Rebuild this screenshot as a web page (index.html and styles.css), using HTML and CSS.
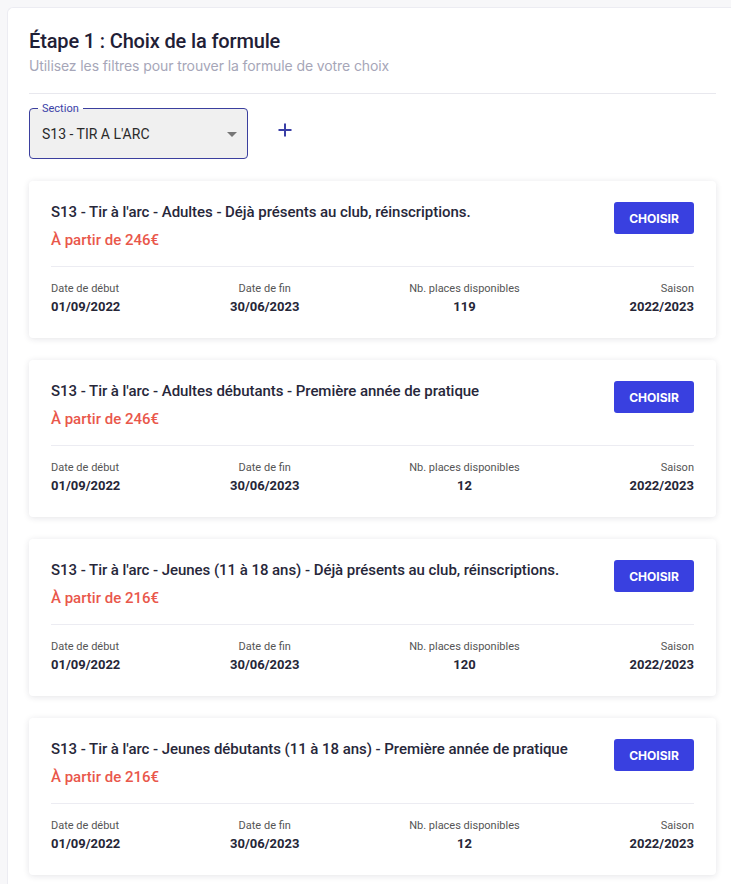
FILE: index.html
```
<!DOCTYPE html>
<html lang="fr">
<head>
<meta charset="utf-8">
<link rel="stylesheet" href="styles.css">
</head>
<body>
<div class="panel">
  <h1 class="title">Étape 1 : Choix de la formule</h1>
  <p class="subtitle">Utilisez les filtres pour trouver la formule de votre choix</p>
  <hr class="sep">
  <div class="filters">
    <div class="select">
      <span class="select-label">Section</span>
      <span class="select-value">S13 - TIR A L'ARC</span>
      <span class="caret"></span>
    </div>
    <button class="add" aria-label="Ajouter">
      <svg width="16" height="16" viewBox="0 0 16 16"><path d="M8 1.5v13M1.5 8h13" stroke="#3a3fa6" stroke-width="2" fill="none"/></svg>
    </button>
  </div>

  <div class="card">
    <div class="card-head">
      <div class="card-info">
        <div class="card-title">S13 - Tir à l'arc - Adultes - Déjà présents au club, réinscriptions.</div>
        <div class="price">À partir de 246€</div>
      </div>
      <button class="btn">CHOISIR</button>
    </div>
    <div class="card-meta">
      <div class="meta meta-left"><div class="meta-label">Date de début</div><div class="meta-value">01/09/2022</div></div>
      <div class="meta"><div class="meta-label">Date de fin</div><div class="meta-value">30/06/2023</div></div>
      <div class="meta"><div class="meta-label">Nb. places disponibles</div><div class="meta-value">119</div></div>
      <div class="meta meta-right"><div class="meta-label">Saison</div><div class="meta-value">2022/2023</div></div>
    </div>
  </div>

  <div class="card">
    <div class="card-head">
      <div class="card-info">
        <div class="card-title">S13 - Tir à l'arc - Adultes débutants - Première année de pratique</div>
        <div class="price">À partir de 246€</div>
      </div>
      <button class="btn">CHOISIR</button>
    </div>
    <div class="card-meta">
      <div class="meta meta-left"><div class="meta-label">Date de début</div><div class="meta-value">01/09/2022</div></div>
      <div class="meta"><div class="meta-label">Date de fin</div><div class="meta-value">30/06/2023</div></div>
      <div class="meta"><div class="meta-label">Nb. places disponibles</div><div class="meta-value">12</div></div>
      <div class="meta meta-right"><div class="meta-label">Saison</div><div class="meta-value">2022/2023</div></div>
    </div>
  </div>

  <div class="card">
    <div class="card-head">
      <div class="card-info">
        <div class="card-title">S13 - Tir à l'arc - Jeunes (11 à 18 ans) - Déjà présents au club, réinscriptions.</div>
        <div class="price">À partir de 216€</div>
      </div>
      <button class="btn">CHOISIR</button>
    </div>
    <div class="card-meta">
      <div class="meta meta-left"><div class="meta-label">Date de début</div><div class="meta-value">01/09/2022</div></div>
      <div class="meta"><div class="meta-label">Date de fin</div><div class="meta-value">30/06/2023</div></div>
      <div class="meta"><div class="meta-label">Nb. places disponibles</div><div class="meta-value">120</div></div>
      <div class="meta meta-right"><div class="meta-label">Saison</div><div class="meta-value">2022/2023</div></div>
    </div>
  </div>

  <div class="card">
    <div class="card-head">
      <div class="card-info">
        <div class="card-title">S13 - Tir à l'arc - Jeunes débutants (11 à 18 ans) - Première année de pratique</div>
        <div class="price">À partir de 216€</div>
      </div>
      <button class="btn">CHOISIR</button>
    </div>
    <div class="card-meta">
      <div class="meta meta-left"><div class="meta-label">Date de début</div><div class="meta-value">01/09/2022</div></div>
      <div class="meta"><div class="meta-label">Date de fin</div><div class="meta-value">30/06/2023</div></div>
      <div class="meta"><div class="meta-label">Nb. places disponibles</div><div class="meta-value">12</div></div>
      <div class="meta meta-right"><div class="meta-label">Saison</div><div class="meta-value">2022/2023</div></div>
    </div>
  </div>
</div>
</body>
</html>
```
FILE: styles.css
```
html, body { margin: 0; padding: 0; }
body {
  background: #f7f7f9;
  font-family: Roboto, "Liberation Sans", sans-serif;
  color: #262637;
  padding: 7px 0 0 7px;
  overflow: hidden;
}
.panel {
  background: #fff;
  border: 1px solid #ececf2;
  border-right: none;
  border-radius: 6px 0 0 0;
  padding: 20px 0 30px 21px;
  width: 740px;
  box-sizing: border-box;
  min-height: 900px;
}
.title {
  margin: 0;
  font-size: 20px;
  line-height: 26px;
  font-weight: 500;
  color: #1f2036;
  font-family: Roboto, sans-serif;
  letter-spacing: -0.15px;
}
.subtitle {
  margin: 2px 0 0;
  font-size: 14px;
  line-height: 20px;
  color: #a6a6b8;
  font-family: Inter, Roboto, sans-serif;
  letter-spacing: -0.1px;
}
.sep {
  border: 0;
  border-top: 1px solid #e8e8ee;
  margin: 17px 0 14px;
  width: 687px;
}
.filters {
  display: flex;
  align-items: center;
  gap: 29px;
}
.select {
  position: relative;
  width: 219px;
  height: 51px;
  box-sizing: border-box;
  border: 1px solid #3b3f9e;
  border-radius: 4px;
  background: #f0f0f0;
  display: flex;
  align-items: center;
  padding: 0 12px;
}
.select-label {
  position: absolute;
  top: -6px;
  left: 8px;
  padding: 0 4px;
  font-size: 11px;
  line-height: 11px;
  color: #3b3fa8;
  background: linear-gradient(#fff 0 6px, #f0f0f0 6px);
}
.select-value {
  font-size: 14px;
  color: #2a2a2a;
}
.caret {
  position: absolute;
  right: 10px;
  top: 23px;
  width: 0; height: 0;
  border-left: 5px solid transparent;
  border-right: 5px solid transparent;
  border-top: 5px solid #777;
}
.add {
  background: none;
  border: 0;
  padding: 0;
  width: 16px;
  height: 16px;
  display: flex;
  margin-top: -8px;
}
.card {
  width: 687px;
  box-sizing: border-box;
  background: #fff;
  border-radius: 4px;
  box-shadow: 0 1px 6px rgba(30, 30, 60, 0.12);
  padding: 21px 22px 22px;
  margin-top: 22px;
}
.card-head {
  display: flex;
  justify-content: space-between;
  align-items: flex-start;
}
.card-title {
  font-size: 15px;
  line-height: 20px;
  font-weight: 500;
  color: #27273a;
  letter-spacing: -0.05px;
}
.price {
  margin-top: 8px;
  font-size: 15px;
  line-height: 20px;
  font-weight: 500;
  color: #e9574b;
}
.btn {
  width: 80px;
  height: 32px;
  border: 0;
  border-radius: 3px;
  background: #3940e0;
  color: #fff;
  font-family: Inter, Roboto, sans-serif;
  font-weight: 700;
  font-size: 12px;
  flex-shrink: 0;
}
.card-meta {
  border-top: 1px solid #ececf2;
  margin-top: 16px;
  padding-top: 14px;
  display: flex;
  justify-content: space-between;
}
.meta { text-align: center; }
.meta-left { text-align: left; }
.meta-right { text-align: right; }
.meta-label {
  font-size: 11px;
  line-height: 16px;
  color: #555;
}
.meta-value {
  margin-top: 1px;
  font-size: 13px;
  line-height: 18px;
  font-weight: 700;
  color: #262637;
}
```
